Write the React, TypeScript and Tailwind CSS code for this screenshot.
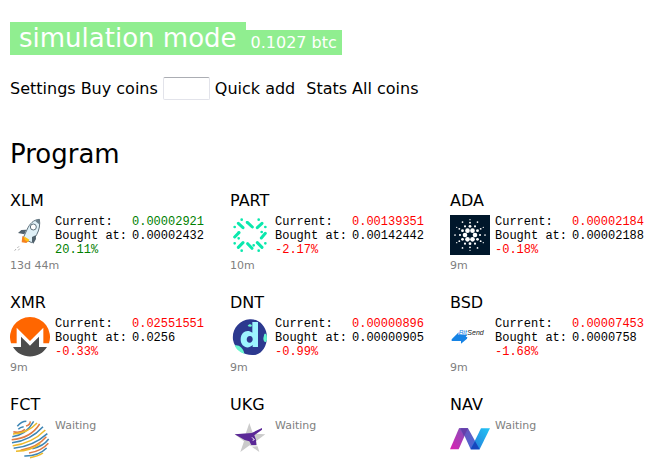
import type { ReactNode } from "react";

type Coin = {
  symbol: string;
  icon: ReactNode;
  current?: string;
  bought?: string;
  change?: string;
  rising?: boolean;
  age?: string;
};

function Rocket() {
  return (
    <svg viewBox="0 0 120 120" className="h-10 w-10" aria-hidden="true">
      <path d="M88 13 C70 14 59 27 52 42 L39 70 L65 83 L80 59 C88 45 91 27 88 13Z" fill="#dff0f7" stroke="#5f717c" strokeWidth="3" />
      <path d="M75 17 L89 12 L89 29Z" fill="#6b7f8a" />
      <path d="M49 44 L34 45 L24 54 L43 58Z M66 66 L77 61 L78 72 L70 86 L66 82Z" fill="#50616c" />
      <circle cx="70" cy="36" r="9" fill="#fff" stroke="#5f717c" strokeWidth="3" />
      <path d="M37 63 L57 77 L49 84 L35 82Z" fill="#f58220" />
      <path d="M42 64 L58 74 L54 80 L44 75Z" fill="#ffc20e" />
      <path d="M27 94 L22 99 M29 101 L25 106 M18 102 L14 107" stroke="#888" strokeWidth="2" />
    </svg>
  );
}

function Particl() {
  return (
    <svg viewBox="0 0 120 120" className="h-10 w-10" stroke="#0be8ad" strokeLinecap="round" aria-hidden="true">
      <path d="M25 25 L39 38 M53 23 L67 36 M82 38 L96 25 M94 69 L106 55 M82 83 L96 97 M53 86 L66 100 M25 97 L39 83 M14 66 L27 53" strokeWidth="9" />
      <path d="M35 14h.1 M51 22h.1 M86 14h.1 M14 36h.1 M26 53h.1 M106 36h.1 M95 51h.1 M26 70h.1 M14 85h.1 M35 107h.1 M71 91h.1 M86 107h.1 M106 85h.1" strokeWidth="8" />
    </svg>
  );
}

const cardanoRings = [
  { radius: 15, dot: 7, count: 6, turn: 0 },
  { radius: 26, dot: 4.2, count: 6, turn: 30 },
  { radius: 30, dot: 3.2, count: 6, turn: 0 },
  { radius: 37, dot: 2.8, count: 6, turn: 30 },
  { radius: 45, dot: 2.6, count: 6, turn: 0 },
  { radius: 46, dot: 2, count: 6, turn: 30 },
];

function Cardano() {
  return (
    <svg viewBox="0 0 120 120" className="h-10 w-10" aria-hidden="true">
      <rect width="120" height="120" fill="#00172b" />
      {cardanoRings.map((ring, r) =>
        Array.from({ length: ring.count }, (_, i) => {
          const angle = ((i * 60 + ring.turn) * Math.PI) / 180;
          return (
            <circle
              key={`${r}-${i}`}
              cx={60 + ring.radius * Math.cos(angle)}
              cy={60 + ring.radius * Math.sin(angle)}
              r={ring.dot}
              fill="#fff"
            />
          );
        }),
      )}
    </svg>
  );
}

function Monero() {
  return (
    <svg viewBox="0 0 120 120" className="h-10 w-10" aria-hidden="true">
      <path d="M3 79 A60 60 0 1 1 117 79 H100 V32 L60 72 L20 32 V79Z" fill="#ff6600" />
      <path d="M9 90 H33 V59 L52 78 L60 86 L68 78 L87 59 V90 H111 A60 60 0 0 1 9 90Z" fill="#4c4c4c" />
    </svg>
  );
}

function District() {
  return (
    <svg viewBox="0 0 120 120" className="h-10 w-10" aria-hidden="true">
      <path d="M59 7 C86 5 106 26 110 51 C114 78 101 108 78 113 C48 119 14 100 9 68 C5 37 28 9 59 7Z" fill="#2c398f" />
      <path d="M14 85 C25 82 40 91 43 110 C28 106 18 96 14 85Z M103 51 C110 47 111 56 111 68 C108 80 100 75 100 64Z M53 27 C56 20 63 20 66 26 C63 31 58 30 53 27Z" fill="#68f7cf" />
      <path d="M67 15 H84 V90 H68 V84 C52 100 31 87 32 66 C33 43 53 36 67 47Z M60 57 C47 57 47 77 59 77 C71 77 71 57 60 57Z" fill="#9df4ff" fillRule="evenodd" />
    </svg>
  );
}

function BitSend() {
  return (
    <svg viewBox="0 0 120 120" className="h-10 w-10" aria-hidden="true">
      <path d="M5 67 L26 46 L25 53 H52 L47 60 H52 L51 65 L33 80 V72 H5Z" fill="#1683e5" />
      <text x="26" y="54" fontSize="21" fontStyle="italic" className="font-['Liberation_Sans']" fill="#1683e5">Bit</text>
      <text x="52" y="54" fontSize="21" fontStyle="italic" className="font-['Liberation_Sans']" fill="#222">Send</text>
    </svg>
  );
}

function Factom() {
  return (
    <svg viewBox="0 0 120 120" className="h-10 w-10" fill="none" strokeWidth="4.5" aria-hidden="true">
      <path d="M22 22 Q34 7 49 7 M25 31 Q33 22 41 24 M7 53 Q48 48 71 7 M6 71 Q61 65 99 23 M11 88 Q70 82 112 44 M67 89 Q100 82 116 60 M43 111 Q85 112 110 87" stroke="#3e86b5" />
      <path d="M10 38 Q32 43 45 31 M48 21 Q60 18 61 7 M5 62 Q62 58 89 15 M32 94 Q84 83 109 53 M57 102 Q94 97 115 73" stroke="#df7b45" />
      <path d="M9 45 Q53 43 81 12 M8 80 Q65 74 106 33 M18 97 Q65 95 91 73 M60 116 Q83 113 99 102" stroke="#edba2b" />
    </svg>
  );
}

function UnikoinGold() {
  return (
    <svg viewBox="0 0 120 120" className="h-10 w-10" aria-hidden="true">
      <path d="M58 12 L69 44 L106 46 L78 67 L88 99 L59 79 L31 99 L42 67 L14 46 L47 44Z" fill="#cbcbcb" />
      <path d="M96 27 L65 42 L14 46 L44 63 L58 67 L64 78 L79 79 L78 62 L73 49 L96 32Z" fill="#5b2897" />
      <path d="M66 55 L73 62 L68 64" fill="none" stroke="#fff" strokeWidth="3" />
      <path d="M61 82 L84 80" stroke="#fff" strokeWidth="3" />
    </svg>
  );
}

function NavCoin() {
  return (
    <svg viewBox="0 0 120 120" className="h-10 w-10" aria-hidden="true">
      <defs>
        <linearGradient id="nav-left" x1="0" y1="1" x2="1" y2="0">
          <stop stopColor="#dc1fb3" />
          <stop offset="1" stopColor="#7958b9" />
        </linearGradient>
        <linearGradient id="nav-mid" x1="0" y1="0" x2="1" y2="1">
          <stop stopColor="#7451b5" />
          <stop offset="1" stopColor="#3f6edd" />
        </linearGradient>
        <linearGradient id="nav-right" x1="0" y1="1" x2="1" y2="0">
          <stop stopColor="#2477d8" />
          <stop offset="1" stopColor="#22c5f5" />
        </linearGradient>
      </defs>
      <path d="M0 91 L27 28 H54 L26 91Z" fill="url(#nav-left)" />
      <path d="M27 28 H54 L89 91 H62 L42 47Z" fill="url(#nav-mid)" />
      <path d="M62 91 L93 28 H120 L89 91Z" fill="url(#nav-right)" />
      <path d="M32 28 H54 L42 52Z" fill="#653eaa" />
      <path d="M62 91 L75 66 L89 91Z" fill="#1646bd" />
    </svg>
  );
}

const coins: Coin[] = [
  { symbol: "XLM", icon: <Rocket />, current: "0.00002921", bought: "0.00002432", change: "20.11%", rising: true, age: "13d 44m" },
  { symbol: "PART", icon: <Particl />, current: "0.00139351", bought: "0.00142442", change: "-2.17%", age: "10m" },
  { symbol: "ADA", icon: <Cardano />, current: "0.00002184", bought: "0.00002188", change: "-0.18%", age: "9m" },
  { symbol: "XMR", icon: <Monero />, current: "0.02551551", bought: "0.0256", change: "-0.33%", age: "9m" },
  { symbol: "DNT", icon: <District />, current: "0.00000896", bought: "0.00000905", change: "-0.99%", age: "9m" },
  { symbol: "BSD", icon: <BitSend />, current: "0.00007453", bought: "0.0000758", change: "-1.68%", age: "9m" },
  { symbol: "FCT", icon: <Factom /> },
  { symbol: "UKG", icon: <UnikoinGold /> },
  { symbol: "NAV", icon: <NavCoin /> },
];

function CoinCard({ coin }: { coin: Coin }) {
  const tone = coin.rising ? "text-[#008000]" : "text-[#ff0000]";
  return (
    <article>
      <h2 className="text-base leading-6">{coin.symbol}</h2>
      <div className="mt-[2px] flex gap-[5px]">
        {coin.icon}
        {coin.current ? (
          <div className="font-['Liberation_Mono',monospace] text-xs leading-[14px]">
            <dl className="grid grid-cols-[77px_auto]">
              <dt className="whitespace-nowrap">Current:</dt>
              <dd className={tone}>{coin.current}</dd>
              <dt className="whitespace-nowrap">Bought at:</dt>
              <dd>{coin.bought}</dd>
            </dl>
            <p className={tone}>{coin.change}</p>
          </div>
        ) : (
          <p className="text-[11px] leading-[14px] text-[#808080]">Waiting</p>
        )}
      </div>
      {coin.age && <p className="mt-[2px] text-[11px] leading-[14px] text-[#808080]">{coin.age}</p>}
    </article>
  );
}

export default function App() {
  return (
    <main className="bg-white pt-[22px] pl-[10px] font-['DejaVu_Sans',Verdana,sans-serif] text-base text-black">
      <header className="flex items-end text-white">
        <div className="bg-[#90ee90] px-[9px] text-[26px] leading-[33px]">simulation mode</div>
        <div className="bg-[#90ee90] px-[5px] leading-[25px]">0.1027 btc</div>
      </header>

      <nav className="mt-[22px] flex flex-wrap items-center gap-[5px] leading-[23px]">
        <a href="#settings">Settings</a>
        <a href="#buy">Buy coins</a>
        <input
          type="text"
          aria-label="Coin to add"
          className="h-[23px] w-[47px] rounded-[2px] border border-[#e2e3ea] border-t-[#abadb3] bg-white px-1 outline-none"
        />
        <button type="button" className="mr-[6px]">Quick add</button>
        <a href="#stats">Stats</a>
        <a href="#coins">All coins</a>
      </nav>

      <h1 className="mt-9 text-[26px] leading-9">Program</h1>

      <section className="mt-[17px] grid grid-cols-[repeat(auto-fill,minmax(200px,1fr))] gap-x-[3px] gap-y-[18px]">
        {coins.map((coin) => (
          <CoinCard key={coin.symbol} coin={coin} />
        ))}
      </section>
    </main>
  );
}
